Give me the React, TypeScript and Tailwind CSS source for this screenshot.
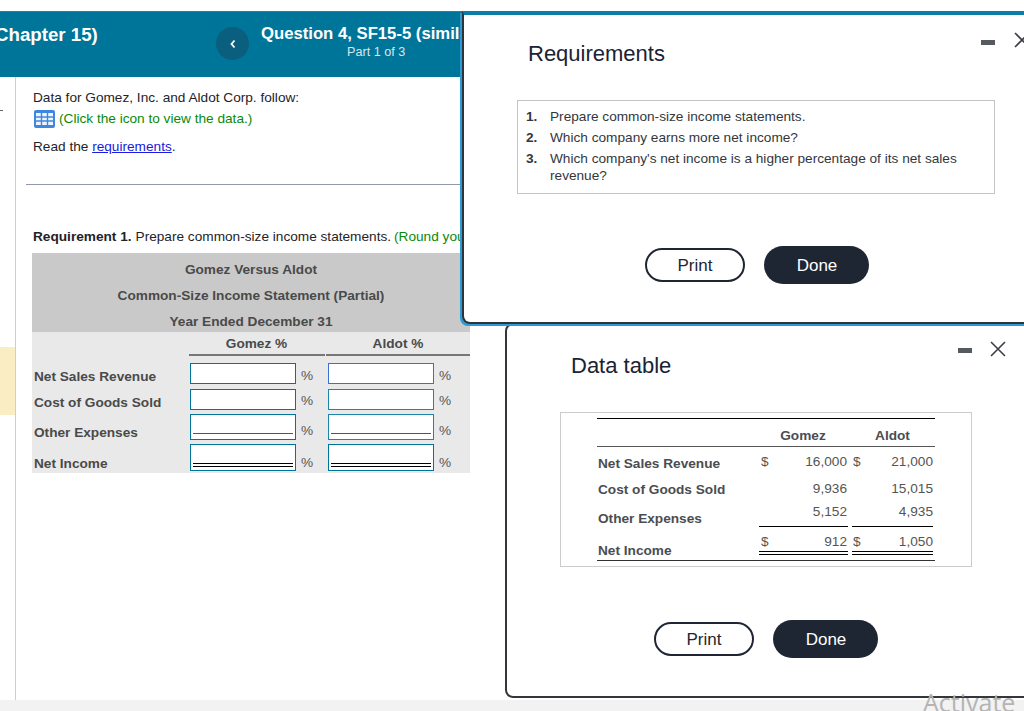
const font = { fontFamily: '"Liberation Sans", Arial, sans-serif' };

const inputRows = [
  { label: 'Net Sales Revenue', h: 'h-[21px]', mb: 'mb-[5px]', rule: 'none', pctPb: 'pb-[1px]', second: 'border-[#3b6fd1]' },
  { label: 'Cost of Goods Sold', h: 'h-[21px]', mb: 'mb-[4px]', rule: 'none', pctPb: 'pb-[2px]', second: 'border-[#1b87a8]' },
  { label: 'Other Expenses', h: 'h-[26px]', mb: 'mb-[4px]', rule: 'single', pctPb: 'pb-[2px]', second: 'border-[#1b87a8]' },
  { label: 'Net Income', h: 'h-[27px]', mb: 'mb-0', rule: 'double', pctPb: 'pb-[1px]', second: 'border-[#00759a]' },
];

function AnswerBox({ rule, border }: { rule: string; border: string }) {
  return (
    <div className={`flex h-full w-[106px] flex-col justify-end border bg-white px-[2px] pb-[2px] ${border}`}>
      {rule === 'single' && <div className="mb-[3px] h-px bg-[#555555]" />}
      {rule === 'double' && (
        <div className="mb-[1px] h-[4px] border-y border-black" />
      )}
    </div>
  );
}

function ModalButtons() {
  return (
    <div className="flex items-center gap-[19px]">
      <button className="h-[34px] w-[100px] rounded-full border-2 border-[#1f2533] bg-white pt-px text-[17px] text-[#1f2533]">
        Print
      </button>
      <button className="h-[38px] w-[105px] rounded-full bg-[#1e2533] pl-px pt-px text-[17px] text-white">
        Done
      </button>
    </div>
  );
}

function DataRow({
  label,
  a,
  b,
  dollar,
  rowClass,
  labelClass,
  valueClass,
  rule,
}: {
  label: string;
  a: string;
  b: string;
  dollar?: boolean;
  rowClass: string;
  labelClass: string;
  valueClass: string;
  rule?: string;
}) {
  const ruleClass =
    rule === 'single'
      ? 'border-b border-black'
      : rule === 'double'
        ? 'border-b-[4px] border-double border-black'
        : '';
  return (
    <div className={`grid grid-cols-[162px_89px_4px_81px_2px] ${rowClass}`}>
      <div className={`pl-[1px] font-bold text-[#4a4d52] ${labelClass}`}>{label}</div>
      <div className={`flex justify-between pl-[2px] pr-px text-[#555] ${valueClass} ${ruleClass}`}>
        <span>{dollar ? '$' : ''}</span>
        <span>{a}</span>
      </div>
      <div />
      <div className={`relative text-right text-[#555] ${valueClass} ${ruleClass}`}>
        {dollar && <span className="absolute left-[1px]">$</span>}
        <span>{b}</span>
      </div>
      <div />
    </div>
  );
}

export default function App() {
  return (
    <div style={font} className="relative h-[711px] w-[1024px] overflow-hidden bg-white text-[13.65px] text-[#1f2328]">
      {/* page behind the dialogs */}
      <div className="flex h-[700px] flex-col pt-[11px]">
        <header className="flex h-[66px] shrink-0 border-t border-[#1b87a8] bg-[#00759a] text-white">
          <div className="ml-[-5px] w-[221px] shrink-0 whitespace-nowrap pt-[9px] text-[18.7px] font-bold">Chapter 15)</div>
          <div className="mt-[15px] flex h-[33px] w-[33px] shrink-0 items-center justify-center rounded-full bg-[#0a5f7e]">
            <svg width="8" height="10" viewBox="0 0 8 10">
              <path d="M5.5 1.5 2.5 5l3 3.500" stroke="white" strokeWidth="1.800" fill="none" />
            </svg>
          </div>
          <div className="ml-[12px] flex flex-col items-start whitespace-nowrap pt-[12px]">
            <div className="text-[16.7px] font-bold leading-[19px]">Question 4, SF15-5 (similar to)</div>
            <div className="ml-[86px] text-[12.65px] leading-[19px] text-[#d5e6ec]">Part 1 of 3</div>
          </div>
        </header>

        <div className="flex min-h-0 flex-1">
          <aside className="relative w-[16px] shrink-0 border-r border-[#c9cedb] pt-[270px]">
            <div className="absolute left-0 top-[33px] h-px w-[3px] bg-[#666]" />
            <div className="h-[68px] bg-[#faedc3]" />
          </aside>

          <main className="w-[444px]">
            <div className="pl-[17px] pt-[13px]">
              <p className="leading-[16px]">Data for Gomez, Inc. and Aldot Corp. follow:</p>
              <div className="mt-[4px] flex items-center">
                <svg width="21" height="18" viewBox="0 0 21 18" className="ml-[1px] shrink-0">
                  <rect width="21" height="18" rx="2" fill="#3f86e0" />
                  <path d="M2 3h17v12H2z" fill="#eef4fc" />
                  <path d="M7.500 3v12M13.500 3v12M2 7h17M2 11h17" stroke="#3f86e0" strokeWidth="1.400" />
                </svg>
                <span className="ml-[4px] leading-[18px] text-[#0a8a0a]">(Click the icon to view the data.)</span>
              </div>
              <p className="mt-[11px] leading-[16px]">
                Read the <a className="text-[#1a1ae0] underline">requirements</a>.
              </p>
            </div>
            <div className="ml-[10px] mt-[29px] h-px bg-[#8f99ab]" />
            <div className="mt-[44px] flex w-[600px] whitespace-nowrap pl-[17px] leading-[16px]">
              <span className="font-bold">Requirement 1.</span>
              <span className="ml-[4px]">Prepare common-size income statements.</span>
              <span className="ml-[3px] text-[#0a8a0a]">(Round your answers)</span>
            </div>

            <section className="ml-[16px] mt-[8px] w-[438px] bg-[#e9e9e9] font-bold text-[#4a4a4a]">
              <div className="h-[79px] bg-[#c9c9c9] pt-[4px] text-center leading-[26px]">
                <div>Gomez Versus Aldot</div>
                <div>Common-Size Income Statement (Partial)</div>
                <div>Year Ended December 31</div>
              </div>
              <div className="grid h-[24px] grid-cols-[157px_136px_1px_144px]">
                <div />
                <div className="border-b-2 border-[#777] pr-[1px] pt-[1px] text-center leading-[21px]">Gomez %</div>
                <div />
                <div className="border-b-2 border-[#777] pt-[1px] text-center leading-[21px]">Aldot %</div>
              </div>
              <div className="pb-[2px] pt-[7px]">
                {inputRows.map((row) => (
                  <div key={row.label} className={`flex ${row.h} ${row.mb}`}>
                    <div className="flex w-[158px] items-end pl-[2px] leading-[15px]">{row.label}</div>
                    <AnswerBox rule={row.rule} border="border-[#00759a]" />
                    <div className={`flex w-[32px] items-end pl-[5px] font-normal leading-[15px] text-[#555] ${row.pctPb}`}>%</div>
                    <AnswerBox rule={row.rule} border={row.second} />
                    <div className={`flex w-[30px] items-end pl-[5px] font-normal leading-[15px] text-[#555] ${row.pctPb}`}>%</div>
                  </div>
                ))}
              </div>
            </section>
          </main>
        </div>
      </div>
      <div className="h-[11px] bg-[#f2f2f2]" />

      {/* Data table dialog */}
      <div className="absolute left-[505px] top-[323px] z-10 h-[375px] w-[530px] rounded-[8px] border-2 border-[#33363b] bg-white">
        <div className="absolute right-[19px] top-0">
          <div className="relative h-[36px] w-[60px]">
            <div className="absolute left-[4px] top-[23px] h-[5px] w-[14px] bg-[#555a60]" />
            <svg width="16" height="16" viewBox="0 0 16 16" className="absolute left-[36px] top-[16px] text-[#3c4046]">
              <path d="M1 1 15 15M15 1 1 15" stroke="currentColor" strokeWidth="1.600" fill="none" />
            </svg>
          </div>
        </div>
        <h2 className="pl-[64px] pt-[28px] text-[22px] leading-[26px] text-[#1a2233]">Data table</h2>
        <div className="ml-[53px] mt-[33px] h-[155px] w-[412px] border border-[#cccccc] px-[36px] pt-[5px]">
          <div className="h-[29px] w-[338px] border-y border-t-black border-b-[#555] pt-[9px] font-bold leading-[16px] text-[#4a4d52]">
            <div className="grid grid-cols-[162px_89px_4px_83px]">
              <div />
              <div className="pr-[1px] text-center">Gomez</div>
              <div />
              <div className="pr-[2px] text-center">Aldot</div>
            </div>
          </div>
          <div className="w-[338px] border-b border-[#333]">
            <DataRow label="Net Sales Revenue" a="16,000" b="21,000" dollar rowClass="h-[27px]" labelClass="pt-[9px] leading-[16px]" valueClass="pt-[7px] leading-[16px]" />
            <DataRow label="Cost of Goods Sold" a="9,936" b="15,015" rowClass="h-[26px]" labelClass="pt-[8px] leading-[16px]" valueClass="pt-[7px] leading-[16px]" />
            <DataRow label="Other Expenses" a="5,152" b="4,935" rowClass="h-[22px]" labelClass="pt-[11px] leading-[16px]" valueClass="pt-[4px] leading-[16px]" rule="single" />
            <DataRow label="Net Income" a="912" b="1,050" dollar rowClass="h-[38px]" labelClass="pt-[21px] leading-[16px]" valueClass="h-[33px] pt-[12px] leading-[16px]" rule="double" />
          </div>
        </div>
        <div className="ml-[147px] mt-[53px]">
          <ModalButtons />
        </div>
      </div>

      {/* Requirements dialog */}
      <div className="absolute left-[462px] top-[11px] z-20 h-[313px] w-[578px] rounded-bl-[8px] border-2 border-t-[4px] border-[#2f3438] border-t-[#0a7ea4] bg-white shadow-[-2px_2px_0_0_#2a9bd4]">
        <div className="absolute right-[8px] top-[17px] flex items-start gap-[19px]">
          <div className="mt-[8px] h-[5px] w-[14px] bg-[#555a60]" />
          <svg width="16" height="16" viewBox="0 0 16 16" className="text-[#3c4046]">
            <path d="M1 1 15 15M15 1 1 15" stroke="currentColor" strokeWidth="1.600" fill="none" />
          </svg>
        </div>
        <h2 className="pl-[64px] pt-[26px] text-[22px] leading-[26px] text-[#1a2233]">Requirements</h2>
        <div className="ml-[53px] mt-[33px] w-[478px] border border-[#c4c4c4] pb-[9px] pl-[8px] pr-[30px] pt-[6px] text-[#33373c]">
          <ol>
            <li className="flex h-[21px] items-center"><span className="w-[24px] shrink-0 font-bold">1.</span>Prepare common-size income statements.</li>
            <li className="flex h-[21px] items-center"><span className="w-[24px] shrink-0 font-bold">2.</span>Which company earns more net income?</li>
            <li className="flex pt-[1px] leading-[17px]">
              <span className="w-[24px] shrink-0 font-bold">3.</span>
              <span>Which company's net income is a higher percentage of its net sales revenue?</span>
            </li>
          </ol>
        </div>
        <div className="ml-[181px] mt-[52px]">
          <ModalButtons />
        </div>
      </div>

      <div className="absolute left-[923px] top-[685px] z-30 text-[25px] leading-[34px] text-[#b4b4b4]" style={{ fontFamily: '"Open Sans", sans-serif' }}>
        Activate
      </div>
    </div>
  );
}
